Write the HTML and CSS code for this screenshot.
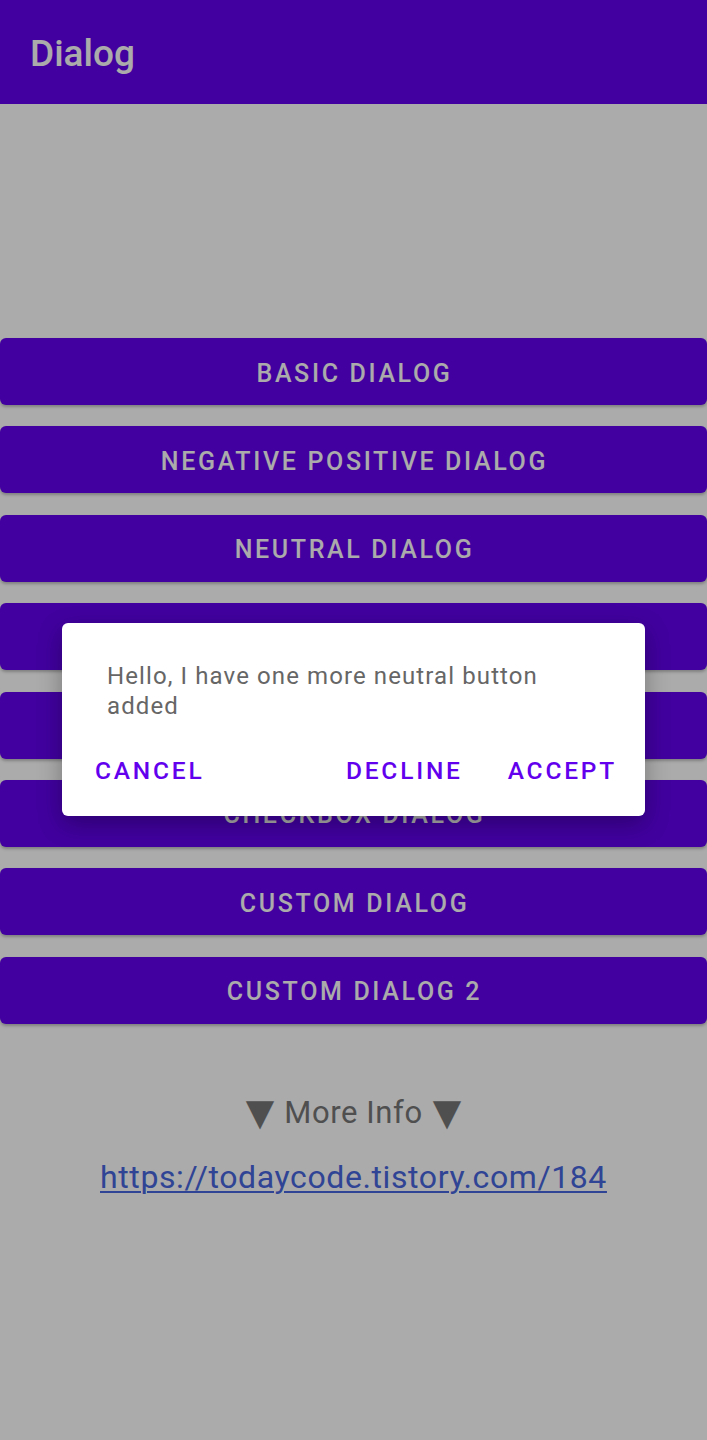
FILE: index.html
```html
<!DOCTYPE html>
<html lang="en">
<head>
    <meta charset="UTF-8">
    <title>Dialog</title>
    <link rel="stylesheet" href="styles.css">
</head>
<body>
    <header class="app-bar">
        <h1>Dialog</h1>
    </header>

    <main class="content">
        <div class="button-list">
            <button class="dialog-btn">Basic Dialog</button>
            <button class="dialog-btn">Negative Positive Dialog</button>
            <button class="dialog-btn">Neutral Dialog</button>
            <button class="dialog-btn">List Dialog</button>
            <button class="dialog-btn">Radio Dialog</button>
            <button class="dialog-btn">Checkbox Dialog</button>
            <button class="dialog-btn">Custom Dialog</button>
            <button class="dialog-btn">Custom Dialog 2</button>
        </div>

        <p class="more-info"><span class="arrow">▼</span>More Info<span class="arrow">▼</span></p>
        <a class="link" href="#">https://todaycode.tistory.com/184</a>
    </main>

    <div class="scrim"></div>

    <div class="dialog">
        <p class="dialog-message">Hello, I have one more neutral button added</p>
        <div class="dialog-actions">
            <button class="action">Cancel</button>
            <span class="spacer"></span>
            <button class="action">Decline</button>
            <button class="action">Accept</button>
        </div>
    </div>
</body>
</html>
```

FILE: styles.css
```css
body {
    font-family: Roboto, 'Noto Sans', sans-serif;
    background-color: #ffffff;
    margin: 0;
    padding: 0;
    width: 707px;
    height: 1440px;
    overflow: hidden;
}

.app-bar {
    background-color: #6200ee;
    height: 104px;
    display: flex;
    align-items: center;
    padding: 0 30px;
    box-sizing: border-box;
}

.app-bar h1 {
    margin: 0;
    color: #ffffff;
    font-size: 37px;
    font-weight: 500;
    padding-top: 2px;
}

.content {
    padding-top: 234px;
    display: flex;
    flex-direction: column;
    align-items: center;
}

.button-list {
    width: 100%;
    display: flex;
    flex-direction: column;
    gap: 21.4px;
}

.dialog-btn {
    height: 67px;
    width: 100%;
    border: none;
    border-radius: 6px;
    background-color: #6200ee;
    color: #ffffff;
    font-family: Roboto, sans-serif;
    font-size: 25px;
    font-weight: 500;
    letter-spacing: 2.65px;
    text-transform: uppercase;
    padding: 3px 0 0 2px;
    box-shadow: 0 2px 3px rgba(0, 0, 0, 0.25);
}

.more-info {
    margin: 70px 0 0;
    font-size: 31px;
    letter-spacing: 0.6px;
    color: #777777;
    line-height: 38px;
    display: flex;
    align-items: center;
    gap: 10px;
}

.arrow {
    font-family: 'DejaVu Sans', sans-serif;
    font-size: 37px;
    letter-spacing: 0;
    line-height: 38px;
}

.link {
    margin-top: 27px;
    font-size: 32px;
    letter-spacing: 0.6px;
    color: #4866de;
    line-height: 36px;
    text-decoration-thickness: 2px;
    text-underline-offset: 3px;
}

.scrim {
    position: absolute;
    top: 0;
    left: 0;
    width: 707px;
    height: 1440px;
    background-color: rgba(0, 0, 0, 0.33);
}

.dialog {
    position: absolute;
    top: 623px;
    left: 62px;
    width: 583px;
    height: 193px;
    box-sizing: border-box;
    background-color: #ffffff;
    border-radius: 6px;
    box-shadow: 0 8px 24px rgba(0, 0, 0, 0.3);
    padding: 38px 0 0;
}

.dialog-message {
    margin: 0 100px 0 45px;
    font-size: 24px;
    letter-spacing: 1.1px;
    line-height: 30px;
    color: #666666;
}

.dialog-actions {
    display: flex;
    align-items: center;
    padding: 27px 16px 0 21px;
}

.spacer {
    flex: 1;
}

.action {
    background: none;
    border: none;
    font-family: Roboto, sans-serif;
    font-size: 24.5px;
    font-weight: 500;
    letter-spacing: 2.8px;
    text-transform: uppercase;
    color: #6200ee;
    padding: 8px 12px;
}

.action + .action {
    margin-left: 21px;
}
```
